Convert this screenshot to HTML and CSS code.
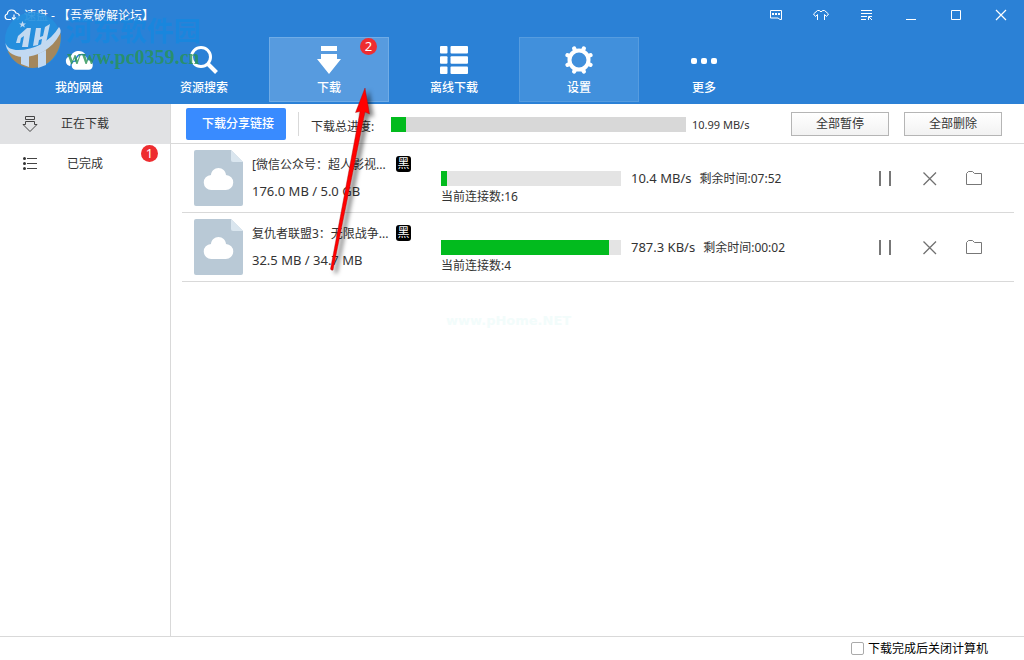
FILE: index.html
```html
<!DOCTYPE html>
<html lang="zh-CN">
<head>
<meta charset="utf-8">
<title>速盘</title>
<link rel="stylesheet" href="styles.css">
</head>
<body>
<svg class="defs" aria-hidden="true">
  <symbol id="file" viewBox="0 0 49 56">
    <path fill="#b9c9d6" d="M2 0H37L49 12V54a2 2 0 0 1-2 2H2a2 2 0 0 1-2-2V2a2 2 0 0 1 2-2z"/>
    <path fill="#dae6ef" d="M37 0L49 12H39a2 2 0 0 1-2-2z"/>
    <path fill="#fff" d="M17.500 40a7.500 7.500 0 0 1-.5-15c.3-4 3.500-7 7.500-7s7.200 3 7.500 7a7.500 7.500 0 0 1-.5 15z"/>
  </symbol>
  <symbol id="pause" viewBox="0 0 16 16"><path fill="#777" d="M1 0h2v15H1zM11 0h2v15h-2z"/></symbol>
  <symbol id="cross" viewBox="0 0 16 16"><path fill="none" stroke="#707070" stroke-width="1.3" d="M1.500 1.500L14 14M14 1.500L1.500 14"/></symbol>
  <symbol id="folder" viewBox="0 0 16 16"><path fill="none" stroke="#777" d="M.5 13.500V2.500L2.500.500H6.500L8.500 2.500H15.500V13.500z"/></symbol>
</svg>
<div class="window">
  <header class="header">
    <div class="titlebar">
      <svg class="app-icon" viewBox="0 0 16 12"><path fill="none" stroke="#fff" stroke-width="1.200" d="M7 10.500H3.500A2.800 2.800 0 0 1 3.300 5C3.500 2.500 5.500 1 7.800 1c2 0 3.600 1.200 4.200 3 2 .2 3.400 1.600 3.400 3.300 0 1.600-1 2.700-2.400 3.100M10 5.500v5M8 8.500l2 2.300 2-2.300"/></svg>
      <h1 class="title">速盘 - 【吾爱破解论坛】</h1>
      <div class="window-tools">
        <button class="tool" aria-label="消息"><svg viewBox="0 0 16 16"><path fill="none" stroke="#fff" d="M2.500 3.500h11v9h-1.500l-2-1.500H2.500z"/><path fill="#fff" d="M4 6h2v2H4zM7 6h2v2H7zM10 6h2v2h-2z"/></svg></button>
        <button class="tool" aria-label="皮肤"><svg viewBox="0 0 16 16"><path fill="none" stroke="#fff" d="M4.500 13V7.500L2.500 9.500.500 7 4.500 3.500h2c0 1.500 3 1.500 3 0h2l4 3.500-2 2.500-2-2V13"/></svg></button>
        <button class="tool" aria-label="菜单"><svg viewBox="0 0 16 16"><path fill="none" stroke="#fff" d="M3 3.500h11M3 6.500h11M3 9.500h6M3 12.500h5M10.500 13V9.500H14M11 10l3 3"/></svg></button>
        <button class="tool" aria-label="最小化"><svg viewBox="0 0 16 16"><path stroke="#fff" d="M3 12.500h10"/></svg></button>
        <button class="tool" aria-label="最大化"><svg viewBox="0 0 16 16"><path fill="none" stroke="#fff" d="M3.500 3.500h9v9h-9z"/></svg></button>
        <button class="tool" aria-label="关闭"><svg viewBox="0 0 16 16"><path stroke="#fff" stroke-width="1.200" d="M3 3l10 10M13 3L3 13"/></svg></button>
      </div>
    </div>
    <nav class="tabs">
      <button class="tab"><svg viewBox="0 0 28 28"><path fill="#fff" d="M5 20a5 5 0 0 1-2-9c1-1 2-1 3-1C7 7 10 5 14 5s7 3 7.500 6l-9 9z"/><path fill="#fff" stroke="#2b81d6" stroke-width="1.500" d="M11 24.500a4.500 4.500 0 0 1-.5-9.500c.5-4 3-6.500 6.500-6.500 3 0 5.500 2 6 5 3 0 5.500 2.200 5.500 5.500s-2 5.500-5 5.500z"/></svg><span>我的网盘</span></button>
      <button class="tab"><svg viewBox="0 0 28 28"><circle cx="11" cy="11" r="9.500" fill="none" stroke="#fff" stroke-width="3"/><path stroke="#fff" stroke-width="4" d="M17.500 17.500L26.500 26.500"/></svg><span>资源搜索</span></button>
      <button class="tab tab-active"><svg viewBox="0 0 28 28"><path fill="#fff" d="M6 0h16v5H6zM6 8h16v5h4L14 28 2 13h4z"/></svg><span>下载</span><b class="badge tab-badge">2</b></button>
      <button class="tab"><svg viewBox="0 0 28 28"><g fill="#fff"><rect y="0" width="7.500" height="7.500" rx="1"/><rect x="10.500" width="17.500" height="7.500" rx="1"/><rect y="10.200" width="7.500" height="7.500" rx="1"/><rect x="10.500" y="10.200" width="17.500" height="7.500" rx="1"/><rect y="20.500" width="7.500" height="7.500" rx="1"/><rect x="10.500" y="20.500" width="17.500" height="7.500" rx="1"/></g></svg><span>离线下载</span></button>
      <button class="tab tab-hover"><svg viewBox="0 0 28 28"><circle cx="14" cy="14" r="9.500" fill="none" stroke="#fff" stroke-width="4"/><g stroke="#fff" stroke-width="4.200" stroke-linecap="round"><path d="M18.100 4.100l.7-1.600M23.900 9.900l1.600-.7M23.900 18.100l1.600.7M18.100 23.900l.7 1.600M9.900 23.900l-.7 1.600M4.100 18.100l-1.600.7M4.100 9.900l-1.600-.7M9.900 4.100l-.7-1.600"/></g></svg><span>设置</span></button>
      <button class="tab"><svg viewBox="0 0 28 28"><g fill="#fff"><rect x="1" y="12" width="6" height="6" rx="2"/><rect x="11" y="12" width="6" height="6" rx="2"/><rect x="21" y="12" width="6" height="6" rx="2"/></g></svg><span>更多</span></button>
    </nav>
  </header>
  <div class="body">
    <aside class="sidebar">
      <button class="side-item side-current"><svg viewBox="0 0 16 16"><path fill="none" stroke="#444" d="M3.500.500h9v3h-9zM3.500 5.500h9v3h2.500L8 15.500 1 8.500h2.500z"/></svg><span>正在下载</span></button>
      <button class="side-item"><svg viewBox="0 0 16 16"><path stroke="#444" d="M5 2.500h10M5 7.500h10M5 12.500h10"/><g fill="#333"><circle cx="2.500" cy="2.500" r="1.500"/><circle cx="2.500" cy="7.500" r="1.500"/><circle cx="2.500" cy="12.500" r="1.500"/></g></svg><span>已完成</span><b class="badge side-badge">1</b></button>
    </aside>
    <main class="main">
      <div class="toolbar">
        <button class="primary">下载分享链接</button>
        <div class="total">
          <span class="total-label">下载总进度:</span>
          <div class="bar bar-total"><div class="fill" style="width:5%"></div></div>
          <span class="total-speed">10.99 MB/s</span>
        </div>
        <button class="plain">全部暂停</button>
        <button class="plain">全部删除</button>
      </div>
      <ul class="list">
        <li class="row">
          <svg class="file-icon"><use href="#file"/></svg>
          <div class="info"><div class="name">[微信公众号：超人影视...</div><div class="size">176.0 MB / 5.0 GB</div></div>
          <span class="mark">黑</span>
          <div class="progress"><div class="bar"><div class="fill" style="width:3.500%"></div></div><div class="links">当前连接数:16</div></div>
          <div class="status"><span class="speed">10.4 MB/s</span><span>剩余时间:07:52</span></div>
          <div class="actions"><button aria-label="暂停"><svg><use href="#pause"/></svg></button><button aria-label="删除"><svg><use href="#cross"/></svg></button><button aria-label="打开文件夹"><svg><use href="#folder"/></svg></button></div>
        </li>
        <li class="row">
          <svg class="file-icon"><use href="#file"/></svg>
          <div class="info"><div class="name">复仇者联盟3：无限战争...</div><div class="size">32.5 MB / 34.7 MB</div></div>
          <span class="mark">黑</span>
          <div class="progress"><div class="bar"><div class="fill" style="width:93.500%"></div></div><div class="links">当前连接数:4</div></div>
          <div class="status"><span class="speed">787.3 KB/s</span><span>剩余时间:00:02</span></div>
          <div class="actions"><button aria-label="暂停"><svg><use href="#pause"/></svg></button><button aria-label="删除"><svg><use href="#cross"/></svg></button><button aria-label="打开文件夹"><svg><use href="#folder"/></svg></button></div>
        </li>
      </ul>
    </main>
  </div>
  <footer class="footer">
    <label class="shutdown"><input type="checkbox">下载完成后关闭计算机</label>
  </footer>
  <div class="site-mark">
    <svg class="site-logo" viewBox="0 0 58 58">
      <circle cx="29" cy="28" r="28" fill="#2590de"/>
      <path fill="#b08850" d="M56.500 21C59 41 44 56 29 56 17 56 8 49 3.500 39c17 6 38-1 53-18z"/>
      <path fill="#d3e3f4" d="M1.500 31C3 36 8 38 14 38c16 0 32-8 41-23 2 2 2 5 1 7C48 37 34 45 18 45 8 44 2 39 1.500 31z"/>
      <path fill="#d3e3f4" d="M12 31l2-7 9-8h4l-3 19h-6l2-11-3 2-1 5zM29 34l3-18h5l-1 9 3-1 2-9 5-3-4 19-5 2 1-6-3 1-1 5z"/>
      <path fill="#d3e3f4" d="M17 43h8v12l-8-3zM34 42l8-4v15l-8 3z"/>
      <path fill="#d3e3f4" d="M18.500 9l1 2.500h2.500l-2 1.500.8 2.500-2.300-1.500-2.200 1.500.7-2.500-2-1.500h2.500z"/>
    </svg>
    <div class="site-name">河东软件园</div>
    <div class="site-url">www.pc0359.cn</div>
  </div>
  <div class="faint-mark">www.pHome.NET</div>
  <svg class="arrow" viewBox="0 0 60 200" aria-hidden="true">
    <path fill="#f00" stroke="#a01010" stroke-width=".4" d="M45 5L35.500 29.500l4.500-1L10.500 186q1 2 2.500 1L45 29l4.500 2z"/>
  </svg>
</div>
</body>
</html>
```
FILE: styles.css
```css
* { box-sizing: border-box; }
body {
  margin: 0;
  font: 12px/18px "Noto Sans", "Noto Sans CJK SC", sans-serif;
  color: #333;
  background: #fff;
}
button {
  margin: 0;
  padding: 0;
  border: 0;
  background: none;
  color: inherit;
  font: inherit;
}
svg { display: block; }
.defs { position: absolute; width: 0; height: 0; }
.window {
  position: relative;
  display: flex;
  flex-direction: column;
  min-height: 100vh;
}

.header { background: #2b81d6; color: #fff; padding-bottom: 2px; }
.titlebar { display: flex; align-items: center; height: 30px; padding: 0 1px 0 4px; }
.app-icon { width: 16px; height: 12px; }
.title { margin: 0 0 0 4px; padding-top: 2px; font-size: 12px; font-weight: 400; }
.window-tools { display: flex; margin-left: auto; }
.tool { display: flex; align-items: center; justify-content: center; width: 45px; height: 30px; }
.tool svg { width: 16px; height: 16px; }

.tabs { display: flex; gap: 5px; padding: 7px 0 0 19px; }
.tab {
  position: relative;
  display: flex;
  flex-direction: column;
  align-items: center;
  gap: 5px;
  width: 120px;
  height: 65px;
  padding-top: 8px;
  border: 1px solid transparent;
  font-weight: 500;
}
.tab svg { width: 28px; height: 28px; }
.tab-active { background: #579bdf; border-color: #70ace6; }
.tab-hover { background: #4190dc; border-color: #569cdf; }
.badge {
  position: absolute;
  width: 17px;
  height: 17px;
  border-radius: 50%;
  background: #ee2d30;
  color: #fff;
  font: 13px/17px "Noto Sans", sans-serif;
  text-align: center;
}
.tab-badge { top: 0; right: 11px; }
.side-badge { top: 1px; right: 12px; }

.body { display: flex; flex: 1; }
.sidebar { width: 171px; border-right: 1px solid #d9d9d9; }
.side-item {
  position: relative;
  display: flex;
  align-items: center;
  width: 100%;
  height: 40px;
  padding-left: 22px;
}
.side-item svg { width: 16px; height: 16px; }
.side-item span { width: 48px; margin-left: 23px; text-align: center; }
.side-current { background: #e1e2e4; }

.main { flex: 1; min-width: 0; }
.toolbar {
  display: flex;
  align-items: center;
  gap: 15px;
  height: 40px;
  padding: 0 22px 0 15px;
  border-bottom: 1px solid #d9d9d9;
}
.primary {
  width: 100px;
  height: 32px;
  padding-left: 4px;
  border-radius: 2px;
  background: #398bff;
  color: #fff;
  font-weight: 500;
}
.total {
  display: flex;
  flex: 1;
  align-items: center;
  height: 24px;
  margin-left: -3px;
  padding: 2px 0 0 12px;
  border-left: 1px solid #d9d9d9;
}
.total-label { width: 80px; padding-top: 4px; }
.total-speed { width: 90px; padding-left: 6px; font-size: 11px; }
.bar { height: 15px; background: #e4e4e4; }
.bar-total { flex: 1; background: #d8d8d8; }
.fill { height: 100%; background: #02bb1e; }
.plain {
  width: 98px;
  height: 24px;
  border: 1px solid #b5b5b5;
  background: linear-gradient(#fff, #f2f2f2);
}

.list { margin: 0; padding: 0 10px 0 11px; list-style: none; }
.row {
  display: flex;
  height: 69px;
  padding: 6px 32px 0 12px;
  border-bottom: 1px solid #d9d9d9;
}
.file-icon { width: 49px; height: 56px; }
.info { width: 144px; margin-left: 9px; padding-top: 6px; white-space: nowrap; }
.size { margin-top: 8px; font-size: 13px; }
.mark {
  width: 15px;
  height: 16px;
  margin-top: 6px;
  border-radius: 3px;
  background: #000;
  color: #fff;
  font-size: 12px;
  line-height: 16px;
  text-align: center;
}
.progress { width: 180px; margin-left: 30px; padding-top: 21px; }
.links { margin-top: 2px; }
.status { display: flex; align-items: baseline; gap: 8px; margin-left: 10px; padding-top: 19px; white-space: nowrap; }
.speed { font-size: 13px; }
.actions { display: flex; gap: 28px; margin-left: auto; padding-top: 21px; }
.actions svg { width: 16px; height: 16px; }
.actions button { height: 16px; }

.footer {
  display: flex;
  justify-content: flex-end;
  height: 24px;
  padding-right: 36px;
  border-top: 1px solid #d9d9d9;
}
.shutdown { display: flex; align-items: center; gap: 4px; color: #000; }
.shutdown input {
  width: 13px;
  height: 13px;
  margin: 0;
  appearance: none;
  border: 1px solid #aaa;
  border-radius: 2px;
  background: #fff;
}

.site-mark { position: absolute; top: 12px; left: 4px; pointer-events: none; }
.site-logo { width: 58px; height: 58px; opacity: .9; }
.site-name {
  position: absolute;
  top: 0;
  left: 62px;
  color: #1788df;
  font: bold 27px/36px "Noto Sans CJK SC", sans-serif;
  white-space: nowrap;
  opacity: .85;
}
.site-url {
  position: absolute;
  top: 33px;
  left: 63px;
  color: #299354;
  font: bold 20px/24px "Liberation Serif", serif;
  opacity: .8;
}
.faint-mark {
  position: absolute;
  top: 312px;
  left: 446px;
  color: #f2fcfb;
  font: bold 13px/18px "DejaVu Sans", sans-serif;
  pointer-events: none;
}
.arrow {
  position: absolute;
  top: 83px;
  left: 320px;
  width: 60px;
  height: 200px;
  filter: drop-shadow(4px 3px 2px rgba(0, 0, 0, .5));
  pointer-events: none;
}
```
